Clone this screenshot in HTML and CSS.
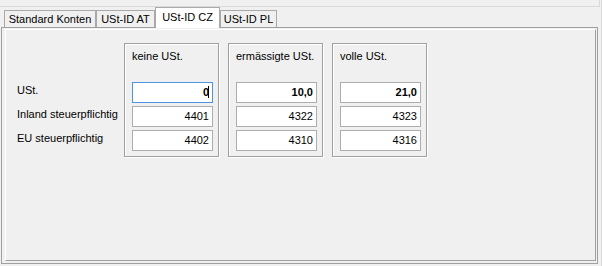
FILE: index.html
```html
<!DOCTYPE html>
<html>
<head>
    <title>USt-ID CZ</title>
    <link rel="stylesheet" href="styles.css">
</head>
<body>
    <div class="window">
        <div class="top-edge"></div>
        <div class="tab-strip">
            <div class="tab tab-standard">Standard Konten</div>
            <div class="tab tab-at">USt-ID AT</div>
            <div class="tab tab-cz selected">USt-ID CZ</div>
            <div class="tab tab-pl">USt-ID PL</div>
        </div>
        <div class="tab-panel">
            <div class="panel-inner">
                <div class="labels">
                    <div class="row-label">USt.</div>
                    <div class="row-label">Inland steuerpflichtig</div>
                    <div class="row-label">EU steuerpflichtig</div>
                </div>
                <div class="groups">
                    <div class="group">
                        <div class="group-title">keine USt.</div>
                        <div class="field focused bold">0<span class="caret"></span></div>
                        <div class="field">4401</div>
                        <div class="field">4402</div>
                    </div>
                    <div class="group">
                        <div class="group-title">ermässigte USt.</div>
                        <div class="field bold">10,0</div>
                        <div class="field">4322</div>
                        <div class="field">4310</div>
                    </div>
                    <div class="group">
                        <div class="group-title">volle USt.</div>
                        <div class="field bold">21,0</div>
                        <div class="field">4323</div>
                        <div class="field">4316</div>
                    </div>
                </div>
            </div>
        </div>
    </div>
</body>
</html>
```

FILE: styles.css
```css
* {
    box-sizing: border-box;
}

body {
    margin: 0;
    background-color: #f0f0f0;
    font-family: "Liberation Sans", Arial, sans-serif;
    font-size: 11px;
    color: #000000;
}

.window {
    width: 602px;
    height: 266px;
    border-right: 1px solid #dadada;
}

.top-edge {
    width: 600px;
    height: 7px;
    border-bottom: 1px solid #dadada;
    border-right: 1px solid #dadada;
}

/* tabs */
.tab-strip {
    display: flex;
    align-items: flex-end;
    height: 20px;
    padding-left: 4px;
}

.tab {
    height: 17px;
    line-height: 16px;
    text-align: center;
    white-space: nowrap;
    border: 1px solid #a9a9a9;
    border-bottom: none;
    background-color: #f0f0f0;
}

.tab-standard { width: 92px; }
.tab-at { width: 59px; }
.tab-cz { width: 65px; }
.tab-pl { width: 57px; }

.tab.selected {
    position: relative;
    z-index: 1;
    height: 21px;
    margin-bottom: -1px;
    padding-top: 1px;
    background-color: #ffffff;
}

/* panel */
.tab-panel {
    margin-left: 1px;
    width: 597px;
    height: 237px;
    padding: 1px 1px 2px 3px;
    border: 1px solid #a0a0a0;
}

.panel-inner {
    display: flex;
    height: 100%;
    padding-left: 11px;
    border-top: 1px solid #ffffff;
    border-left: 1px solid #ffffff;
    border-right: 1px solid #a0a0a0;
    border-bottom: 1px solid #a0a0a0;
}

.labels {
    width: 107px;
    padding-top: 52px;
}

.row-label {
    height: 21px;
    margin-bottom: 3px;
    line-height: 16px;
    white-space: nowrap;
}

.groups {
    display: flex;
    gap: 9px;
    padding-top: 13px;
    align-items: flex-start;
}

.group {
    width: 95px;
    padding: 4px 5px 5px 7px;
    border: 1px solid #a0a0a0;
    box-shadow: inset 1px 1px 0 #ffffff, 1px 1px 0 #ffffff;
}

.group-title {
    line-height: 16px;
    margin-bottom: 18px;
    white-space: nowrap;
}

.field {
    width: 81px;
    height: 21px;
    margin-bottom: 3px;
    padding-right: 3px;
    line-height: 19px;
    text-align: right;
    background-color: #ffffff;
    border: 1px solid #adadad;
}

.field:last-child {
    margin-bottom: 0;
}

.field.bold {
    font-weight: bold;
}

.field.focused {
    border-color: #4d94e3;
}

.caret {
    display: inline-block;
    width: 0;
    height: 12px;
    margin-left: -1px;
    vertical-align: -2px;
    border-left: 1px solid #000000;
}
```
